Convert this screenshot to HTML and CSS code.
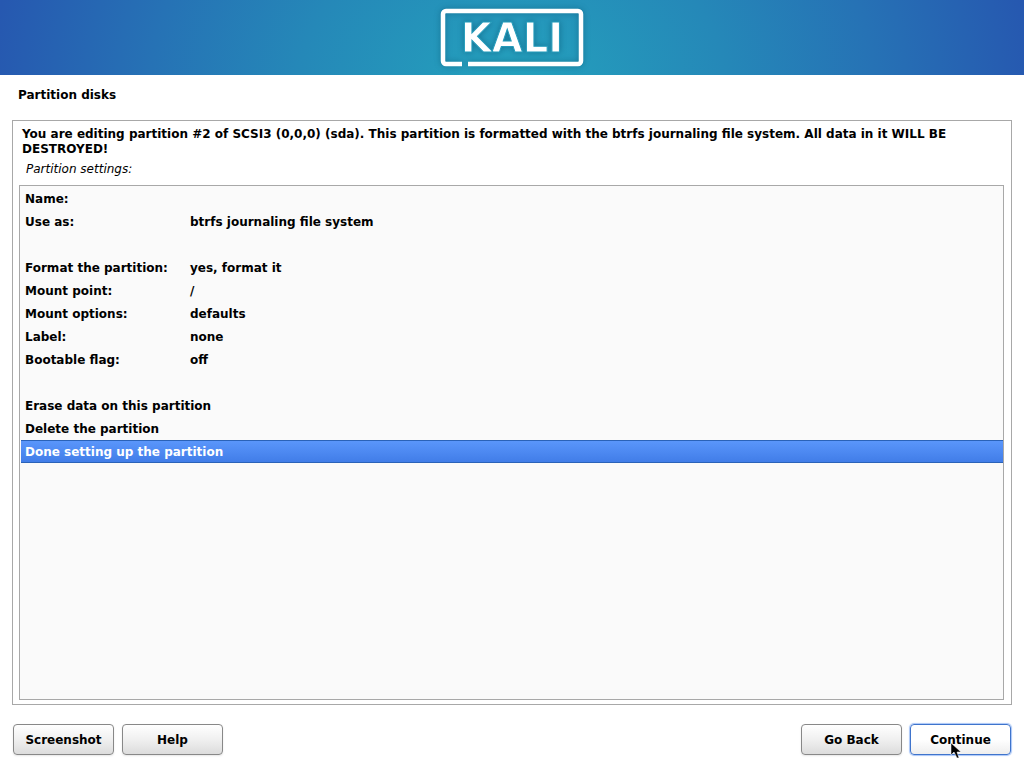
FILE: index.html
```
<!DOCTYPE html>
<html lang="en">

<head>
    <meta charset="UTF-8">
    <meta name="viewport" content="width=device-width, initial-scale=1.0">
    <title>Partition disks</title>
    <link rel="stylesheet" href="styles.css">
</head>

<body>
    <header class="banner">
        <svg class="logo" width="152" height="75" viewBox="0 0 152 75">
            <path d="M26 64H10a3 3 0 0 1-3-3V14a3 3 0 0 1 3-3h132a3 3 0 0 1 3 3v47a3 3 0 0 1-3 3H32" fill="none" stroke="#fff" stroke-width="4.5" />
            <text x="76" y="52" text-anchor="middle">KALI</text>
        </svg>
    </header>

    <main class="installer">
        <h1>Partition disks</h1>

        <section class="question">
            <p class="description">You are editing partition #2 of SCSI3 (0,0,0) (sda). This partition is formatted with the btrfs journaling file system. All data in it WILL BE DESTROYED!</p>
            <p class="hint" id="settings-label">Partition settings:</p>

            <div class="list">
                <table class="settings" aria-labelledby="settings-label">
                    <tr><th scope="row">Name:</th><td></td></tr>
                    <tr><th scope="row">Use as:</th><td>btrfs journaling file system</td></tr>
                    <tr><td colspan="2"></td></tr>
                    <tr><th scope="row">Format the partition:</th><td>yes, format it</td></tr>
                    <tr><th scope="row">Mount point:</th><td>/</td></tr>
                    <tr><th scope="row">Mount options:</th><td>defaults</td></tr>
                    <tr><th scope="row">Label:</th><td>none</td></tr>
                    <tr><th scope="row">Bootable flag:</th><td>off</td></tr>
                    <tr><td colspan="2"></td></tr>
                    <tr><td colspan="2">Erase data on this partition</td></tr>
                    <tr><td colspan="2">Delete the partition</td></tr>
                    <tr class="selected"><td colspan="2">Done setting up the partition</td></tr>
                </table>
            </div>
        </section>

        <footer class="actions">
            <button type="button">Screenshot</button>
            <button type="button">Help</button>
            <button type="button" class="back">Go Back</button>
            <button type="button" class="default">Continue
                <svg class="pointer" width="12" height="18" viewBox="0 0 12 18">
                    <path d="M1 1v12l3-3 3 6h2l-2-6h4z" fill="#000" stroke="#fff" stroke-width="0.5" />
                </svg>
            </button>
        </footer>
    </main>
</body>

</html>
```

FILE: styles.css
```
/* Reset styles */

* {
    margin: 0;
    padding: 0;
    box-sizing: border-box;
}

body {
    display: flex;
    flex-direction: column;
    min-height: 100vh;
    font-family: "DejaVu Sans", sans-serif;
    font-size: 12px;
    font-weight: bold;
    line-height: 15px;
    background-color: #fff;
    color: #000;
}
/* Banner */

.banner {
    display: flex;
    justify-content: center;
    height: 75px;
    background: radial-gradient(ellipse 52% 520% at 50% 110%, #24a2bd 0%, #2588b8 40%, #2672b5 68%, #2658b0 98%);
}

.logo {
    filter: drop-shadow(0 0 3px rgba(0, 60, 90, 0.4));
}

.logo text {
    fill: #fff;
    font-family: "DejaVu Sans", sans-serif;
    font-size: 40px;
    font-weight: bold;
    stroke: #249bbb;
    stroke-width: 1px;
}
/* Main area */

.installer {
    flex: 1;
    display: flex;
    flex-direction: column;
    padding: 13px 12px;
}

.installer h1 {
    font-size: 12px;
    line-height: 15px;
    margin: 0 6px 17px;
}

.question {
    flex: 1;
    display: flex;
    flex-direction: column;
    padding: 6px 7px 4px 6px;
    border: 1px solid #a8a8a8;
}

.description {
    padding: 0 3px;
}

.hint {
    padding: 0 7px;
    margin: 5px 0 8px;
    font-style: italic;
    font-weight: normal;
}
/* Settings list */

.list {
    flex: 1;
    padding: 1px 0 0 1px;
    border: 1px solid #a8a8a8;
    background-color: #fafafa;
}

.settings {
    width: 100%;
    border-collapse: separate;
    border-spacing: 0;
    table-layout: fixed;
}

.settings th,
.settings td {
    height: 23px;
    padding: 2px 4px 0;
    text-align: left;
}

.settings th {
    width: 165px;
}

.settings .selected td {
    border-top: 1px solid #2a62b8;
    border-bottom: 1px solid #2a62b8;
    background: linear-gradient(#5a96fb, #417de8);
    color: #fff;
}
/* Buttons */

.actions {
    display: flex;
    gap: 8px;
    margin: 19px 1px 0;
}

.actions button {
    position: relative;
    width: 101px;
    height: 31px;
    padding-top: 2px;
    border: 1px solid #888;
    border-radius: 4px;
    background: linear-gradient(#fff, #f0f0f0 50%, #dcdcdc);
    box-shadow: 0 1px 2px rgba(0, 0, 0, 0.1);
    font: inherit;
    color: #000;
}

.actions .back {
    margin-left: auto;
}

.actions .default {
    border-color: #3f74cc;
    background: linear-gradient(#fff 50%, #eee);
    box-shadow: 0 0 1px 1px #a9c6f8;
}

.pointer {
    position: absolute;
    left: 39px;
    top: 17px;
}
```
